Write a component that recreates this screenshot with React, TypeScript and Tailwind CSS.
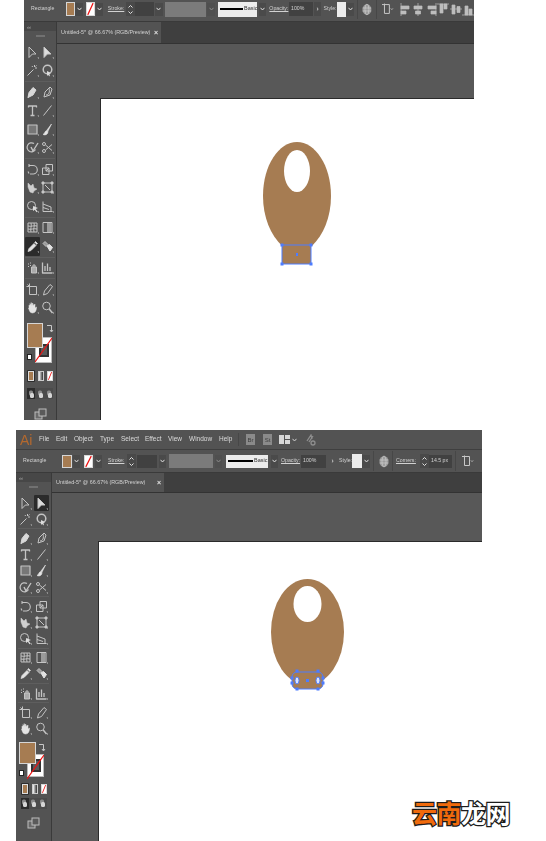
import type { ReactNode } from "react"

const FILL = "#a67c52"
const BLUE = "#4d7cff"

function Ic({ children, size = 13, mark = true }: { children: ReactNode; size?: number; mark?: boolean }) {
  return (
    <svg width={size} height={size} viewBox="0 0 13 13" fill="none" stroke="#c4c4c4" strokeWidth="1" strokeLinejoin="round">
      {children}
      {mark && <path d="M13 13v-1.6h-1.6z" fill="#c4c4c4" stroke="none" />}
    </svg>
  )
}

const tools: Record<string, ReactNode> = {
  select: <path d="M3 1l7 7H6.4L3 11.5z" />,
  direct: <path d="M3 1l7 7H6.4L3 11.5z" fill="#dcdcdc" />,
  wand: <path d="M1.5 11.5l6-6M8.5 1v2M11 4h-2M10.5 1.500l-1 1M6 2l.6 1" />,
  lasso: <><circle cx="6.500" cy="5.500" r="4.300" strokeWidth="1.500" /><path d="M6 7l4 2-1.500 1 .5 2.500-2-1.500-1 1z" fill="#dcdcdc" stroke="none" /></>,
  pen: <path d="M2 11.500l1-5 4-5 3 2.500-3 5zM2 11.500l3-3" fill="#d8d8d8" stroke="#d8d8d8" />,
  curve: <><path d="M3 11l1-5 5-5 2 2-2 6z" /><path d="M5 9c3 0 4-3 3-7" /></>,
  type: <path d="M2.500 3.500V2h8v1.500M6.500 2v9.500M4.500 11.500h4" strokeWidth="1.300" />,
  line: <path d="M2.500 11.500l8-10" />,
  rect: <rect x="2" y="2" width="9" height="9" fill="#777" strokeWidth="1.200" />,
  brush: <path d="M10.500 1L6 7l1 1zM6 7.500c-2 0-2 3-4 4 2.500 1 5 0 5-3z" fill="#e4e4e4" stroke="#e4e4e4" strokeWidth=".6" />,
  shaper: <><path d="M8 2.500a4.500 4.500 0 1 0 1.500 6" strokeWidth="1.200" /><path d="M5 6l2 4 5-8" strokeWidth="1.400" /></>,
  scissors: <><circle cx="3" cy="3" r="1.500" /><circle cx="3" cy="10" r="1.500" /><path d="M4.500 4L11 9.500M4.500 9L11 3.500" /></>,
  rotate: <path d="M3 2.500h3.500a4 4 0 0 1 1 8.500H4M3 1v3M2 8.500l1 2" strokeWidth="1.100" />,
  scale: <><rect x="1.500" y="5" width="6.500" height="6.500" /><rect x="5" y="1.500" width="6.500" height="6.500" /><path d="M5 8l3-3" /></>,
  width: <path d="M2 2l3 3 2-2 1 4 3 1-3 2-1 2-3-1-2-5z" fill="#cfcfcf" stroke="#cfcfcf" strokeWidth=".5" />,
  free: <><rect x="2" y="2" width="9" height="9" /><path d="M1 1h2v2H1zM10 1h2v2h-2zM1 10h2v2H1zM10 10h2v2h-2zM4 4l5 5" fill="#cfcfcf" /></>,
  builder: <><circle cx="5.500" cy="5.500" r="4" /><path d="M7 6l5 2-2.300 1 2 2.500-1.200.8-1.700-2.600L7 11z" fill="#dcdcdc" stroke="none" /></>,
  persp: <path d="M2 1.500v10h9.500M2 4l8 3v4.500M2 7.500l6 2" />,
  mesh: <><rect x="2" y="2" width="9" height="9" /><path d="M2 5c3 1 6-1 9 0M2 8c3 1 6-1 9 0M5 2c1 3-1 6 0 9M8 2c1 3-1 6 0 9" /></>,
  gradient: <><rect x="2" y="1.500" width="9" height="10" /><rect x="6" y="2" width="4.500" height="9" fill="#9a9a9a" stroke="none" /></>,
  dropper: <path d="M2 11.500l1-3 5-5 2 2-5 5zM8.500 2.500l1-1 2 2-1 1" fill="#e2e2e2" stroke="#e2e2e2" strokeWidth=".7" />,
  blend: <><path d="M2 3.500l2-2 3 3-2 2z" fill="#9a9a9a" /><path d="M6 6l2.500-1.500 3 3L9 11z" fill="#e2e2e2" stroke="#e2e2e2" /></>,
  spray: <><rect x="5.500" y="6" width="5" height="6" fill="#aaa" /><path d="M7 6V4h2v2M2 3h1M2 5.500h1M4 2h1M4 4.500h1" /></>,
  graph: <path d="M1.500 1.500v10.500h10M4 10V5M6.500 10V2.500M9 10V6" strokeWidth="1.300" />,
  artboard: <><rect x="3.500" y="3.500" width="7" height="8" /><path d="M.5 3.500h3V.5M3.500 3.500l-2-2" /></>,
  slice: <path d="M9 1.500l2.500 2-5 7-4 1.500 1-4z" />,
  hand: <path d="M3 6.500V4l1 .5V2.500l1.200 2V1.500l1.300 3V2l1.200 2.500 1.300-1.500v4l1.500-1c0 3-1 6-4 6-3 0-3-3-4-4.500z" fill="#e4e4e4" stroke="#e4e4e4" strokeWidth=".5" />,
  zoom: <><circle cx="5.500" cy="5" r="3.800" /><path d="M8.200 8l3.300 4" strokeWidth="1.500" /></>,
}

const groups = [
  [["select", "direct"], ["wand", "lasso"]],
  [["pen", "curve"], ["type", "line"], ["rect", "brush"], ["shaper", "scissors"]],
  [["rotate", "scale"], ["width", "free"], ["builder", "persp"]],
  [["mesh", "gradient"], ["dropper", "blend"]],
  [["spray", "graph"]],
  [["artboard", "slice"], ["hand", "zoom"]],
]

function Stripes({ className }: { className: string }) {
  return (
    <div className={`relative overflow-hidden border border-[#d8d8d8] bg-white ${className}`}>
      <svg className="absolute inset-0 h-full w-full" viewBox="0 0 10 10" preserveAspectRatio="none">
        <path d="M1 10L9 0" stroke="#f01010" strokeWidth="1.600" />
      </svg>
    </div>
  )
}

function Toolbar({ compact, active }: { compact?: boolean; active: string }) {
  return (
    <div className={`flex shrink-0 flex-col items-center border-r border-[#3a3a3a] bg-[#535353] blur-[0.4px] ${compact ? "w-[36px]" : "w-[33px]"}`}>
      <div className="flex h-[9px] w-full items-center bg-[#474747] pl-[3px] text-[6px] leading-none text-[#bbbbbb] font-['Liberation_Sans',sans-serif]">‹‹</div>
      <div className={`h-[2px] w-[9px] bg-[#717171] ${compact ? "mt-[4px] mb-[7px]" : "mt-[4px] mb-[6px]"}`} />
      {groups.map((rows, g) => (
        <div key={g} className={`flex flex-col ${g > 0 ? "mt-[1px] border-t border-[#5e5e5e] pt-[1px]" : ""}`}>
          {rows.map((row) => (
            <div key={row[0]} className={`flex ${compact ? "h-[16.200px] gap-[1px]" : "h-[18.500px]"}`}>
              {row.map((t) => (
                <div key={t} className={`flex w-[15px] items-center justify-center ${t === active ? "rounded-[1px] bg-[#2b2b2b]" : ""}`}>
                  <Ic>{tools[t]}</Ic>
                </div>
              ))}
            </div>
          ))}
        </div>
      ))}
      <div className={`flex w-full pl-[3px] ${compact ? "mt-[5px]" : "mt-[6px]"}`}>
        <div className={`relative w-[28px] ${compact ? "h-[39px]" : "h-[41px]"}`}>
          <div className={`absolute left-[8px] flex w-[17px] items-center justify-center border border-[#bbbbbb] bg-white ${compact ? "top-[12px] h-[23px]" : "top-[14px] h-[26px]"}`}>
            <div className="h-[13px] w-[10px] border-[2px] border-[#333333] bg-[#5a5a5a]" />
          </div>
          <svg className={`absolute left-[8px] ${compact ? "top-[12px]" : "top-[14px]"}`} width="17" height="26" viewBox="0 0 17 26">
            <path d="M0 25L17 1" stroke="#f01010" strokeWidth="1.200" />
          </svg>
          <div className={`absolute left-0 top-0 border border-[#d6d6d6] bg-[#a67c52] ${compact ? "h-[22px] w-[17px]" : "h-[25px] w-[16px]"}`} />
          <svg className="absolute left-[20px] top-[1px]" width="7" height="9" viewBox="0 0 7 9" fill="none" stroke="#c8c8c8">
            <path d="M0 1.500h4.500v6M3 6l1.500 2L6 6" />
          </svg>
          <div className={`absolute left-0 h-[6px] w-[5px] border border-[#222222] bg-white ${compact ? "top-[28px]" : "top-[31px]"}`} />
        </div>
      </div>
      <div className={`flex items-center gap-[3px] ${compact ? "mt-[2px]" : "mt-[6px]"}`}>
        <div className="rounded-[1px] bg-[#2d2d2d] p-[1px]">
          <div className="h-[10px] w-[6px] border border-[#dddddd] bg-[#a67c52]" />
        </div>
        <div className="h-[10px] w-[6px] border border-[#cccccc] bg-gradient-to-r from-white to-[#333333]" />
        <Stripes className="h-[10px] w-[6px]" />
      </div>
      <div className={`flex items-center gap-[1px] bg-[#4b4b4b] ${compact ? "mt-[3px]" : "mt-[6px]"}`}>
        {["#2c2c2c", "#4b4b4b", "#4b4b4b"].map((bg, i) => (
          <div key={i} className={`flex h-[11px] w-[8px] items-center justify-center ${bg === "#2c2c2c" ? "bg-[#2c2c2c]" : "bg-[#4b4b4b]"}`}>
            <svg width="7" height="8" viewBox="0 0 7 8">
              <rect x="1" y="0.500" width="4" height="5" rx="1.500" fill="#8c8c8c" />
              <rect x="2" y="3" width="4" height="5" rx="1.500" fill="#d6d6d6" />
            </svg>
          </div>
        ))}
      </div>
      <div className={compact ? "mt-[8px]" : "mt-[9px]"}>
        <svg width="13" height="12" viewBox="0 0 13 12" fill="none" stroke="#bdbdbd">
          <rect x="1" y="4" width="7" height="7" fill="#6a6a6a" />
          <rect x="5" y="1" width="7" height="7" fill="#5a5a5a" />
        </svg>
      </div>
    </div>
  )
}

const label = "text-[5.200px] leading-none text-[#d2d2d2] font-['Liberation_Sans',sans-serif] whitespace-nowrap"

function Chevron({ className = "" }: { className?: string }) {
  return (
    <div className={`flex h-[13px] items-center justify-center bg-[#4a4a4a] ${className}`}>
      <svg width="5" height="4" viewBox="0 0 5 4" fill="none" stroke="#e0e0e0" strokeWidth="1">
        <path d="M.5 .8L2.500 3 4.500 .8" />
      </svg>
    </div>
  )
}

function Spinner({ className = "" }: { className?: string }) {
  return (
    <div className={`flex h-[14px] flex-col items-center justify-center gap-[3px] bg-[#494949] ${className}`}>
      <svg width="5" height="3" viewBox="0 0 5 3" fill="none" stroke="#e0e0e0"><path d="M.5 2.500L2.500 .5 4.500 2.500" /></svg>
      <svg width="5" height="3" viewBox="0 0 5 3" fill="none" stroke="#e0e0e0"><path d="M.5 .5L2.500 2.500 4.500 .5" /></svg>
    </div>
  )
}

function Globe({ className = "" }: { className?: string }) {
  return (
    <svg className={className} width="10" height="13" viewBox="0 0 10 13">
      <ellipse cx="5" cy="6.500" rx="4.500" ry="5.500" fill="#9c9c9c" />
      <ellipse cx="5" cy="6.500" rx="2" ry="5.500" fill="none" stroke="#d4d4d4" strokeWidth=".6" />
      <path d="M.5 5h9M.5 8h9" stroke="#d4d4d4" strokeWidth=".6" />
    </svg>
  )
}

function DocIcon({ className = "" }: { className?: string }) {
  return (
    <svg className={className} width="12" height="12" viewBox="0 0 12 12" fill="none" stroke="#c8c8c8">
      <path d="M0 1.500h2M2.500 1.500h5v9h-5zM2.500 .5v2" />
      <path d="M9 5.500l1 1 1-1" />
    </svg>
  )
}

function AlignIcons() {
  const shapes = [
    "M1 0v13M1 3h8v3H1zM1 8h5v3H1z",
    "M6 0v13M2 3h8v3H2zM3.500 8h5v3h-5z",
    "M11 0v13M3 3h8v3H3zM6 8h5v3H6z",
    "M0 1h12M3 1h3v9H3zM7 1h3v5H7z",
    "M0 6h12M2 2h3v9H2zM7 3.500h3v6H7z",
    "M0 12h12M3 3h3v9H3zM7 6h3v6H7z",
  ]
  return (
    <div className="ml-[6px] flex gap-[0.500px]">
      {shapes.map((d) => (
        <svg key={d} width="12" height="13" viewBox="0 0 12 13" fill="#bdbdbd" stroke="#bdbdbd" strokeWidth=".7">
          <path d={d} />
        </svg>
      ))}
    </div>
  )
}

function Divider({ className = "" }: { className?: string }) {
  return <div className={`h-[20px] w-[1px] bg-[#474747] ${className}`} />
}

function TopControl() {
  return (
    <div className="flex h-[22px] shrink-0 items-center border-b border-[#3a3a3a] bg-[#535353] pb-[3px] blur-[0.4px]">
      <span className={`ml-[7px] w-[36px] ${label}`}>Rectangle</span>
      <div className="h-[14px] w-[9px] border border-[#d6d6d6] bg-[#a67c52]" />
      <Chevron className="w-[8px]" />
      <Stripes className="ml-[3px] h-[14px] w-[9px]" />
      <Chevron className="ml-[1px] w-[7px]" />
      <span className={`ml-[5px] w-[18px] underline ${label}`}>Stroke:</span>
      <Spinner className="w-[10px]" />
      <div className="h-[14px] w-[19px] bg-[#414141]" />
      <Chevron className="ml-[1px] w-[8px]" />
      <div className="ml-[2px] h-[15px] w-[42px] bg-[#7b7b7b]" />
      <Chevron className="ml-[1px] w-[8px] opacity-40" />
      <div className="ml-[3px] flex h-[15px] w-[40px] items-center gap-[1px] bg-[#ececec] pl-[2px]">
        <div className="h-[2px] w-[23px] bg-black" />
        <span className="text-[5.500px] leading-none text-[#333333] font-['Liberation_Sans',sans-serif]">Basic</span>
      </div>
      <Chevron className="ml-[2px] w-[7px]" />
      <span className={`ml-[3px] w-[20px] underline ${label}`}>Opacity:</span>
      <div className={`flex h-[14px] w-[24px] items-center bg-[#414141] pl-[2px] ${label}`}>100%</div>
      <div className="ml-[1px] flex h-[14px] w-[8px] items-center justify-center bg-[#4a4a4a] text-[7px] text-[#dddddd]">›</div>
      <span className={`ml-[2px] w-[14px] ${label}`}>Style:</span>
      <div className="h-[15px] w-[9px] bg-[#ececec]" />
      <Chevron className="w-[8px]" />
      <Divider className="ml-[3px]" />
      <Globe className="ml-[4px]" />
      <Divider className="ml-[4px]" />
      <DocIcon className="ml-[5px]" />
      <AlignIcons />
    </div>
  )
}

function MenuBar() {
  const items: [string, string][] = [
    ["File", "w-[17px]"],
    ["Edit", "w-[18px]"],
    ["Object", "w-[26px]"],
    ["Type", "w-[21px]"],
    ["Select", "w-[24px]"],
    ["Effect", "w-[23px]"],
    ["View", "w-[21px]"],
    ["Window", "w-[30px]"],
    ["Help", "w-[19px]"],
  ]
  return (
    <div className="flex h-[20px] shrink-0 items-center border-b border-[#3f3f3f] bg-[#535353] blur-[0.3px]">
      <span className="ml-[4px] w-[19px] text-[14px] leading-none text-[#b4692e] font-['Liberation_Sans',sans-serif]">Ai</span>
      {items.map(([name, w]) => (
        <span key={name} className={`${w} text-[6.500px] leading-none text-[#dcdcdc] font-['Liberation_Sans',sans-serif]`}>{name}</span>
      ))}
      <div className="h-[13px] w-[1px] bg-[#474747]" />
      <div className="ml-[7px] flex h-[11px] w-[9px] items-center justify-center bg-[#8a8a8a] text-[6px] leading-none text-[#3d3d3d] font-['Liberation_Sans',sans-serif]">Br</div>
      <div className="ml-[8px] flex h-[11px] w-[9px] items-center justify-center bg-[#8a8a8a] text-[6px] leading-none text-[#3d3d3d] font-['Liberation_Sans',sans-serif]">St</div>
      <svg className="ml-[7px]" width="11" height="9" viewBox="0 0 11 9" fill="#d8d8d8">
        <path d="M0 0h5v9H0zM6 0h5v4H6zM6 5h5v4H6z" />
      </svg>
      <svg className="ml-[2px]" width="5" height="4" viewBox="0 0 5 4" fill="none" stroke="#d0d0d0"><path d="M.5 .8L2.500 3 4.500 .8" /></svg>
      <svg className="ml-[9px]" width="11" height="12" viewBox="0 0 11 12" fill="none" stroke="#8e8e8e" strokeWidth="1.300">
        <path d="M1 7l4-6 1 4M3 8l4-6M7 11a2 2 0 1 0 0-4 2 2 0 0 0 0 4z" />
      </svg>
    </div>
  )
}

function BottomControl() {
  return (
    <div className="flex h-[23px] shrink-0 items-center border-b border-[#3a3a3a] bg-[#535353] blur-[0.4px]">
      <span className={`ml-[7px] w-[39px] ${label}`}>Rectangle</span>
      <div className="h-[13px] w-[10px] border border-[#d6d6d6] bg-[#a67c52]" />
      <Chevron className="ml-[1px] w-[7px]" />
      <Stripes className="ml-[4px] h-[13px] w-[9px]" />
      <Chevron className="ml-[2px] w-[7px]" />
      <span className={`ml-[6px] w-[19px] underline ${label}`}>Stroke:</span>
      <Spinner className="w-[9px]" />
      <div className="ml-[1px] h-[13px] w-[20px] bg-[#414141]" />
      <Chevron className="ml-[2px] w-[7px]" />
      <div className="ml-[3px] h-[14px] w-[44px] bg-[#7b7b7b]" />
      <Chevron className="ml-[2px] w-[7px] opacity-40" />
      <div className="ml-[4px] flex h-[13px] w-[42px] items-center gap-[1px] bg-[#ececec] pl-[2px]">
        <div className="h-[2px] w-[25px] bg-black" />
        <span className="text-[5.500px] leading-none text-[#333333] font-['Liberation_Sans',sans-serif]">Basic</span>
      </div>
      <Chevron className="ml-[3px] w-[7px]" />
      <span className={`ml-[3px] w-[20px] underline ${label}`}>Opacity:</span>
      <div className={`flex h-[13px] w-[25px] items-center bg-[#414141] pl-[2px] ${label}`}>100%</div>
      <div className="ml-[3px] flex h-[13px] w-[7px] items-center justify-center text-[7px] text-[#dddddd]">›</div>
      <span className={`ml-[3px] w-[13px] ${label}`}>Style:</span>
      <div className="h-[14px] w-[10px] bg-[#ececec]" />
      <Chevron className="w-[8px]" />
      <Divider className="ml-[3px]" />
      <Globe className="ml-[5px]" />
      <Divider className="ml-[3px]" />
      <span className={`ml-[3px] w-[24px] underline ${label}`}>Corners:</span>
      <Spinner className="w-[9px]" />
      <div className={`flex h-[13px] w-[23px] items-center bg-[#414141] pl-[2px] ${label}`}>14.5 px</div>
      <Divider className="ml-[3px]" />
      <DocIcon className="ml-[6px]" />
    </div>
  )
}

function TabBar({ compact }: { compact?: boolean }) {
  return (
    <div className={`flex flex-1 border-b border-[#333333] bg-[#3f3f3f] blur-[0.3px] ${compact ? "h-[20px]" : "h-[22px]"}`}>
      <div className={`flex items-center justify-between bg-[#535353] pl-[4px] pr-[3px] ${compact ? "w-[112px]" : "w-[104px]"}`}>
        <span className="text-[5.400px] leading-none text-[#d2d2d2] font-['Liberation_Sans',sans-serif] whitespace-nowrap">Untitled-5* @ 66.67% (RGB/Preview)</span>
        <span className="text-[7px] leading-none font-bold text-[#e4e4e4] font-['Liberation_Sans',sans-serif]">×</span>
      </div>
    </div>
  )
}

function Handle({ x, y }: { x: number; y: number }) {
  return <rect x={x - 1.500} y={y - 1.500} width="3" height="3" fill={BLUE} />
}

function TopShape() {
  return (
    <svg className="ml-[161px] mt-[42px] block" width="70" height="125" viewBox="0 0 70 125">
      <path d="M1 55C1 24 17 1 35 1s34 23 34 54c0 22-8 39-19 50H20C9 94 1 77 1 55z" fill={FILL} />
      <ellipse cx="35" cy="30" rx="13" ry="21" fill="white" />
      <rect x="20" y="104" width="29" height="19" fill={FILL} stroke={BLUE} />
      <Handle x={20} y={104} />
      <Handle x={49} y={104} />
      <Handle x={20} y={123} />
      <Handle x={49} y={123} />
      <rect x="34" y="112" width="2" height="3" fill={BLUE} />
    </svg>
  )
}

function BottomShape() {
  return (
    <svg className="ml-[171px] mt-[36px] block" width="78" height="115" viewBox="0 0 78 115">
      <ellipse cx="37.500" cy="54" rx="36.500" ry="53" fill={FILL} />
      <ellipse cx="37.500" cy="26" rx="14" ry="18" fill="white" />
      <rect x="22" y="94" width="31" height="17" rx="5" fill={FILL} stroke={BLUE} />
      <Handle x={27} y={93} />
      <Handle x={48} y={93} />
      <Handle x={27} y={111} />
      <Handle x={48} y={111} />
      <Handle x={22} y={100} />
      <Handle x={22} y={105} />
      <Handle x={53} y={100} />
      <Handle x={53} y={105} />
      <ellipse cx="27" cy="102.500" rx="2" ry="3.500" fill="#dce6ff" stroke={BLUE} />
      <ellipse cx="48" cy="102.500" rx="2" ry="3.500" fill="#dce6ff" stroke={BLUE} />
      <rect x="36" y="101" width="3" height="3" fill={BLUE} />
    </svg>
  )
}

export default function App() {
  return (
    <div className="relative flex h-[841px] w-[546px] flex-col overflow-hidden bg-white">
      <section className="ml-[24px] flex h-[420px] w-[450px] shrink-0 flex-col overflow-hidden bg-[#585858]">
        <TopControl />
        <div className="flex min-h-0 flex-1">
          <Toolbar active="dropper" />
          <div className="flex min-w-0 flex-1 flex-col">
            <div className="flex h-[22px] shrink-0"><TabBar /></div>
            <div className="mt-[54px] ml-[43px] flex-1 border-t border-l border-[#2a2a2a] bg-white">
              <TopShape />
            </div>
          </div>
        </div>
      </section>

      <section className="mt-[10px] ml-[16px] flex h-[411px] w-[466px] shrink-0 flex-col overflow-hidden bg-[#585858]">
        <MenuBar />
        <BottomControl />
        <div className="flex min-h-0 flex-1">
          <Toolbar compact active="direct" />
          <div className="flex min-w-0 flex-1 flex-col">
            <div className="flex h-[20px] shrink-0"><TabBar compact /></div>
            <div className="mt-[48px] ml-[46px] flex-1 border-t border-l border-[#2a2a2a] bg-white">
              <BottomShape />
            </div>
          </div>
        </div>
      </section>

      <div className="absolute left-[412px] top-[796px] text-[25px] leading-[32px] font-bold tracking-[-0.500px] [-webkit-text-stroke:2.500px_#1c1c1c] [paint-order:stroke] font-['Noto_Sans_CJK_SC',sans-serif]">
        <span className="text-[#f06a0c]">云南</span>
        <span className="text-white">龙网</span>
      </div>
    </div>
  )
}
